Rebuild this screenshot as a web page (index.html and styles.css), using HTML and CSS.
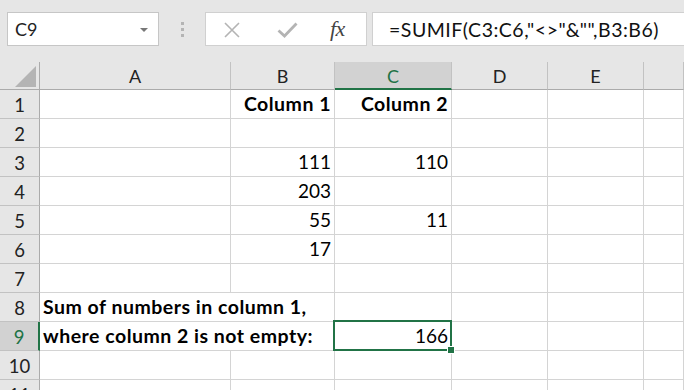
FILE: index.html
```html
<!DOCTYPE html>
<html lang="en">

<head>
    <meta charset="UTF-8" />
    <meta name="viewport" content="width=device-width, initial-scale=1.0" />
    <title>SUMIF not empty</title>
    <link rel="stylesheet" href="styles.css">
</head>

<body>
    <div class="toolbar">
        <div class="name-box">
            <span>C9</span>
            <span class="caret"></span>
        </div>
        <div class="grip">
            <span></span><span></span><span></span>
        </div>
        <div class="fx-buttons">
            <svg class="icon" width="18" height="16" viewBox="0 0 18 16">
                <path d="M2 1 L16 15 M16 1 L2 15" stroke="#b4b4b4" stroke-width="1.6" fill="none" />
            </svg>
            <svg class="icon" width="21" height="16" viewBox="0 0 21 16">
                <path d="M1.5 8.5 L7.5 14 L19.5 1.5" stroke="#b4b4b4" stroke-width="2.8" fill="none" />
            </svg>
            <span class="fx">fx</span>
        </div>
        <div class="formula">=SUMIF(C3:C6,"&lt;&gt;"&amp;"",B3:B6)</div>
    </div>

    <div class="sheet">
        <div class="row head-row">
            <div class="corner"><span class="tri"></span></div>
            <div class="col-head">A</div>
            <div class="col-head">B</div>
            <div class="col-head active">C</div>
            <div class="col-head">D</div>
            <div class="col-head">E</div>
            <div class="col-head"></div>
        </div>

        <div class="row">
            <div class="row-head">1</div>
            <div class="cell"></div>
            <div class="cell num bold">Column 1</div>
            <div class="cell num bold">Column 2</div>
            <div class="cell"></div>
            <div class="cell"></div>
            <div class="cell"></div>
        </div>
        <div class="row">
            <div class="row-head">2</div>
            <div class="cell"></div>
            <div class="cell"></div>
            <div class="cell"></div>
            <div class="cell"></div>
            <div class="cell"></div>
            <div class="cell"></div>
        </div>
        <div class="row">
            <div class="row-head">3</div>
            <div class="cell"></div>
            <div class="cell num">111</div>
            <div class="cell num">110</div>
            <div class="cell"></div>
            <div class="cell"></div>
            <div class="cell"></div>
        </div>
        <div class="row">
            <div class="row-head">4</div>
            <div class="cell"></div>
            <div class="cell num">203</div>
            <div class="cell"></div>
            <div class="cell"></div>
            <div class="cell"></div>
            <div class="cell"></div>
        </div>
        <div class="row">
            <div class="row-head">5</div>
            <div class="cell"></div>
            <div class="cell num">55</div>
            <div class="cell num">11</div>
            <div class="cell"></div>
            <div class="cell"></div>
            <div class="cell"></div>
        </div>
        <div class="row">
            <div class="row-head">6</div>
            <div class="cell"></div>
            <div class="cell num">17</div>
            <div class="cell"></div>
            <div class="cell"></div>
            <div class="cell"></div>
            <div class="cell"></div>
        </div>
        <div class="row">
            <div class="row-head">7</div>
            <div class="cell"></div>
            <div class="cell"></div>
            <div class="cell"></div>
            <div class="cell"></div>
            <div class="cell"></div>
            <div class="cell"></div>
        </div>
        <div class="row">
            <div class="row-head">8</div>
            <div class="cell bold wide">Sum of numbers in column 1,</div>
            <div class="cell"></div>
            <div class="cell"></div>
            <div class="cell"></div>
            <div class="cell"></div>
        </div>
        <div class="row">
            <div class="row-head active">9</div>
            <div class="cell bold wide">where column 2 is not empty:</div>
            <div class="cell num selected">166</div>
            <div class="cell"></div>
            <div class="cell"></div>
            <div class="cell"></div>
        </div>
        <div class="row">
            <div class="row-head">10</div>
            <div class="cell"></div>
            <div class="cell"></div>
            <div class="cell"></div>
            <div class="cell"></div>
            <div class="cell"></div>
            <div class="cell"></div>
        </div>
        <div class="row">
            <div class="row-head">11</div>
            <div class="cell"></div>
            <div class="cell"></div>
            <div class="cell"></div>
            <div class="cell"></div>
            <div class="cell"></div>
            <div class="cell"></div>
        </div>
    </div>
</body>

</html>
```

FILE: styles.css
```css
body {
    margin: 0;
    padding: 0;
    width: 684px;
    height: 390px;
    overflow: hidden;
    background: #e6e6e6;
    font-family: Lato, "Open Sans", sans-serif;
    color: #000;
}

/* formula bar */
.toolbar {
    height: 62px;
    box-sizing: border-box;
    padding-top: 12px;
    display: flex;
    align-items: flex-start;
}

.name-box {
    margin-left: 7px;
    width: 152px;
    height: 34px;
    box-sizing: border-box;
    background: white;
    border: 1px solid #c6c6c6;
    display: flex;
    align-items: center;
    justify-content: space-between;
    padding: 0 10px 0 7px;
    font-size: 18px;
    color: #222;
}

.caret {
    width: 0;
    height: 0;
    border-left: 4px solid transparent;
    border-right: 4px solid transparent;
    border-top: 4px solid #777;
    margin-top: 2px;
}

.grip {
    width: 46px;
    height: 34px;
    display: flex;
    flex-direction: column;
    align-items: center;
    justify-content: center;
    gap: 3px;
}

.grip span {
    width: 3px;
    height: 3px;
    background: #b4b4b4;
}

.fx-buttons {
    width: 162px;
    height: 34px;
    box-sizing: border-box;
    background: white;
    border: 1px solid #d0d0d0;
    display: flex;
    align-items: center;
    padding-left: 17px;
    gap: 36px;
}

.icon {
    display: block;
    margin-top: 2px;
}

.fx {
    font-family: "Liberation Serif", serif;
    font-style: italic;
    font-size: 22px;
    color: #444;
    margin-left: -4px;
    letter-spacing: -0.5px;
}

.formula {
    flex: 1;
    margin-left: 5px;
    height: 34px;
    box-sizing: border-box;
    background: white;
    border: 1px solid #d0d0d0;
    border-right: none;
    display: flex;
    align-items: center;
    padding-left: 16px;
    font-size: 19.5px;
    letter-spacing: 0.5px;
    color: #111;
    white-space: nowrap;
}

/* sheet */
.sheet {
    background: white;
}

.row {
    display: grid;
    grid-template-columns: 40px 191px 104px 117px 96px 96px 40px;
    height: 29px;
}

.head-row {
    height: 28px;
    background: #e6e6e6;
}

.corner,
.col-head,
.row-head,
.cell {
    box-sizing: border-box;
    border-right: 1px solid #d4d4d4;
    border-bottom: 1px solid #d4d4d4;
}

.corner {
    position: relative;
    border-right-color: #ababab;
    border-bottom-color: #ababab;
}

.tri {
    position: absolute;
    right: 3px;
    bottom: 2px;
    width: 0;
    height: 0;
    border-left: 21px solid transparent;
    border-bottom: 21px solid #b4b4b4;
}

.col-head {
    border-right-color: #c2c2c2;
    border-bottom-color: #ababab;
    display: flex;
    align-items: center;
    justify-content: center;
    font-size: 18px;
    color: #222;
    padding-top: 1px;
}

.col-head.active {
    background: #d2d2d2;
    color: #217346;
    border-bottom: 2px solid #217346;
}

.row-head {
    background: #e6e6e6;
    border-right-color: #ababab;
    border-bottom-color: #c2c2c2;
    display: flex;
    align-items: center;
    justify-content: center;
    font-size: 18.5px;
    color: #222;
    padding-top: 2px;
}

.row-head.active {
    background: #d2d2d2;
    color: #217346;
    border-right: 2px solid #217346;
}

.cell {
    display: flex;
    align-items: flex-end;
    padding: 0 3px 3px 3px;
    font-size: 19px;
    white-space: nowrap;
}

.num {
    justify-content: flex-end;
}

.bold {
    font-weight: bold;
    font-size: 19.5px;
    letter-spacing: 0.5px;
}

.wide {
    grid-column: span 2;
}

.selected {
    position: relative;
}

.selected::after {
    content: "";
    position: absolute;
    left: -2px;
    top: -2px;
    right: -1px;
    bottom: -1px;
    border: 2px solid #217346;
}

.selected::before {
    content: "";
    position: absolute;
    right: -4px;
    bottom: -4px;
    width: 6px;
    height: 6px;
    background: #217346;
    border: 1px solid white;
    z-index: 1;
}
```
